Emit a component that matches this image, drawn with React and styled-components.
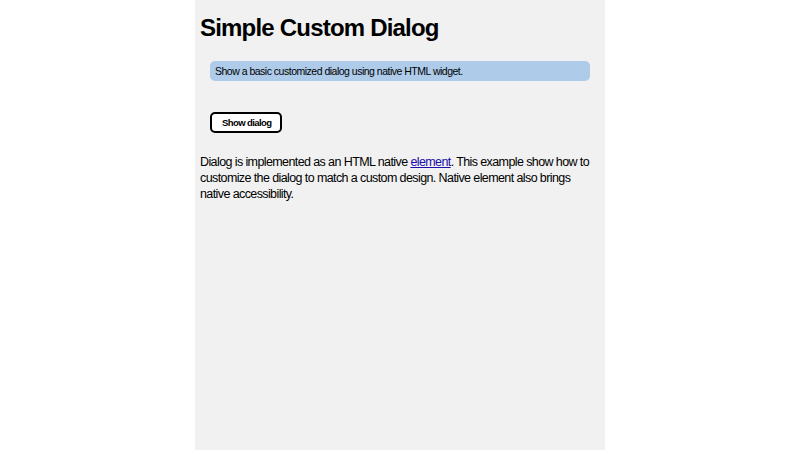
import React from "react";
import styled, { createGlobalStyle } from "styled-components";

const GlobalStyle = createGlobalStyle`
    html, body {
        margin: 0;
        padding: 0;
        background: #ffffff;
        height: 100%;
    }
    #root {
        height: 100%;
    }
`;

const Page = styled.main`
    width: 410px;
    min-height: 450px;
    margin: 0 auto;
    padding: 0 5px;
    box-sizing: border-box;
    background: #f1f1f1;
    font-family: "Liberation Sans", Arial, sans-serif;
    color: #000;
`;

const Title = styled.h1`
    margin: 0;
    padding-top: 13px;
    font-size: 24px;
    line-height: 30px;
    letter-spacing: -0.8px;
    font-weight: bold;
`;

const Note = styled.div`
    margin: 18px 10px 0;
    padding: 0 5px;
    height: 20px;
    display: flex;
    align-items: center;
    background: #aecbea;
    border-radius: 5px;
    font-size: 10.5px;
    letter-spacing: -0.5px;
`;

const Actions = styled.div`
    padding: 31px 10px 0;
`;

const Button = styled.button`
    height: 21px;
    padding: 0 9px 0 10px;
    background: #ffffff;
    border: 2px solid #000;
    border-radius: 5px;
    font-family: inherit;
    font-size: 9.5px;
    letter-spacing: -0.6px;
    font-weight: bold;
    color: #000;
`;

const Text = styled.p`
    margin: 21px 0 0;
    font-size: 12.5px;
    line-height: 16px;
    letter-spacing: -0.6px;

    a {
        color: #1a0dab;
    }
`;

function App() {
    return (
        <>
            <GlobalStyle />
            <Page>
                <Title>Simple Custom Dialog</Title>
                <Note>Show a basic customized dialog using native HTML widget.</Note>
                <Actions>
                    <Button>Show dialog</Button>
                </Actions>
                <Text>
                    Dialog is implemented as an HTML native <a href="#">element</a>. This
                    example show how to customize the dialog to match a custom design.
                    Native element also brings native accessibility.
                </Text>
            </Page>
        </>
    );
}

export default App;
